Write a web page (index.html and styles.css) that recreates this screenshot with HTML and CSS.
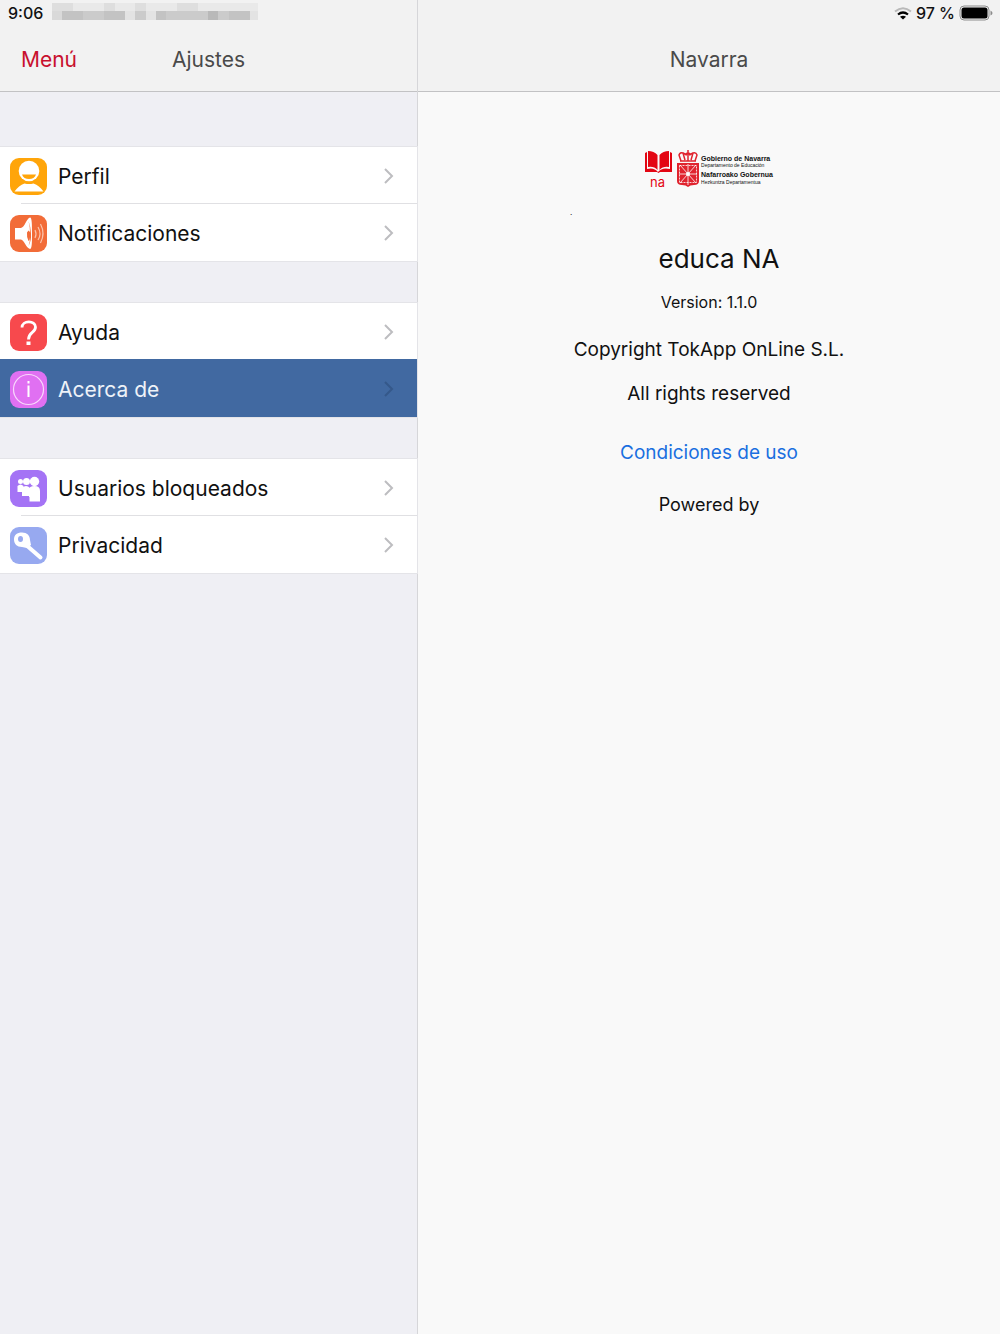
FILE: index.html
```html
<!DOCTYPE html>
<html lang="es">
<head>
  <meta charset="UTF-8">
  <meta name="viewport" content="width=device-width, initial-scale=1">
  <title>Ajustes</title>
  <link rel="stylesheet" href="styles.css">
</head>
<body>

  <aside class="sidebar">
    <header class="header">
      <div class="status">
        <span>9:06</span>
        <svg class="network" viewBox="0 0 206 20" shape-rendering="crispEdges" aria-hidden="true">
          <path fill="#e9e9e9" d="M0 0h206v8H0z"/>
          <path fill="#dedede" d="M0 0h21v8H0zM52 0h11v8H52zM83 0h11v8H83zM125 0h21v8h-21z"/>
          <path fill="#e3e3e3" d="M0 8h206v9H0z"/>
          <path fill="#d9d9d9" d="M0 8h10v9H0z"/>
          <path fill="#c3c3c3" d="M10 8h21v9H10zM52 8h21v9H52zM104 8h10v9h-10zM177 8h21v9h-21z"/>
          <path fill="#cbcbcb" d="M31 8h21v9H31zM83 8h11v9H83zM114 8h42v9h-42zM166 8h11v9h-11z"/>
          <path fill="#b9b9b9" d="M156 8h10v9h-10z"/>
        </svg>
      </div>
      <nav class="bar">
        <a class="back" href="#">Menú</a>
        <h1>Ajustes</h1>
      </nav>
    </header>

    <nav class="groups">
      <ul class="group">
        <li><a class="row" href="#">
          <svg class="icon" viewBox="0 0 37 37" aria-hidden="true">
            <rect width="37" height="37" rx="9" fill="#ffa50a"/>
            <circle cx="19" cy="13" r="10.300" fill="#fff"/>
            <path fill="#ffa50a" d="M12 16.500h14c-1 3-3.500 4.500-7 4.500s-6-1.500-7-4.500z"/>
            <path fill="#fff" d="M4.500 33.500c3-4 6-6.500 10-8 3 .8 6 .8 9 0 4 1.500 7 4 10 8z"/>
          </svg>
          <span>Perfil</span>
          <svg class="chevron" viewBox="0 0 10 16" aria-hidden="true"><path d="M1 1l7 7-7 7"/></svg>
        </a></li>
        <li><a class="row" href="#">
          <svg class="icon" viewBox="0 0 37 37" aria-hidden="true">
            <rect width="37" height="37" rx="9" fill="#f26c38"/>
            <path fill="#fff" d="M5 13h6c4-1 5-9 9-10.500 2 0 2 7 2 16S22 34 20 34c-4-1-5-8-9-9.500H5z"/>
            <path fill="#f26c38" d="M18.500 6q1.500 6 1.500 11l-1.500-1.500-1.500 2q-.5 5 1.500 8.500 1 0 1.500-4 0 5-1.500 9 3-5 2.500-12.500T18.500 6z"/>
            <g fill="none" stroke="#fbc4ad" stroke-width="1.200">
              <path d="M25 15q2 4 0 8M28 12q4 7 0 13M30.500 9q5 9.500 0 19"/>
            </g>
          </svg>
          <span>Notificaciones</span>
          <svg class="chevron" viewBox="0 0 10 16" aria-hidden="true"><path d="M1 1l7 7-7 7"/></svg>
        </a></li>
      </ul>

      <ul class="group">
        <li><a class="row" href="#">
          <svg class="icon" viewBox="0 0 37 37" aria-hidden="true">
            <rect width="37" height="37" rx="9" fill="#f7494d"/>
            <path fill="none" stroke="#fff" stroke-width="2.800" d="M12 13.500c0-7.500 13.500-7.500 13.500-.5 0 6-7 5-7 12.500"/>
            <path fill="#fff" d="M16.500 27.500h4v3.500h-4z"/>
          </svg>
          <span>Ayuda</span>
          <svg class="chevron" viewBox="0 0 10 16" aria-hidden="true"><path d="M1 1l7 7-7 7"/></svg>
        </a></li>
        <li><a class="row selected" href="#" aria-current="page">
          <svg class="icon" viewBox="0 0 37 37" aria-hidden="true">
            <rect width="37" height="37" rx="9" fill="#e070f2"/>
            <circle cx="18.500" cy="18.500" r="15" fill="none" stroke="#f8d8fc" stroke-width="1.200"/>
            <path fill="#fff" d="M17.500 10h2v2.500h-2zM17.500 14.500h2V26h-2z"/>
          </svg>
          <span>Acerca de</span>
          <svg class="chevron" viewBox="0 0 10 16" aria-hidden="true"><path d="M1 1l7 7-7 7"/></svg>
        </a></li>
      </ul>

      <ul class="group">
        <li><a class="row" href="#">
          <svg class="icon" viewBox="0 0 37 37" aria-hidden="true">
            <rect width="37" height="37" rx="9" fill="#a473f5"/>
            <g fill="#fff">
              <circle cx="10.500" cy="11.500" r="2.500"/>
              <path d="M7.500 16q3-3 6 0v6h-6z"/>
              <circle cx="16.500" cy="11.500" r="3.500"/>
              <path d="M12 18q4-4 8 0v8h-8z"/>
              <circle cx="24.500" cy="11.500" r="4.700"/>
              <path d="M19 20q0-4 5.500-4t5.500 5v10.500H19.500V27H19z"/>
            </g>
          </svg>
          <span>Usuarios bloqueados</span>
          <svg class="chevron" viewBox="0 0 10 16" aria-hidden="true"><path d="M1 1l7 7-7 7"/></svg>
        </a></li>
        <li><a class="row" href="#">
          <svg class="icon" viewBox="0 0 37 37" aria-hidden="true">
            <rect width="37" height="37" rx="9" fill="#97a9f0"/>
            <path stroke="#fff" stroke-width="4" stroke-linecap="round" d="M15 17l15.500 13.500"/>
            <path fill="#fff" d="M12 5.500c5 0 8 3 8 7.500l1 5-4 3-5-1c-5 0-8-3-8-7.500s3-7 8-7z"/>
            <ellipse cx="10.500" cy="12" rx="2.500" ry="3" fill="#97a9f0"/>
          </svg>
          <span>Privacidad</span>
          <svg class="chevron" viewBox="0 0 10 16" aria-hidden="true"><path d="M1 1l7 7-7 7"/></svg>
        </a></li>
      </ul>
    </nav>
  </aside>

  <main class="content">
    <header class="header">
      <div class="status status-right">
        <svg class="wifi" viewBox="0 0 18 13" aria-hidden="true">
          <path fill="none" stroke="#b9b9b9" stroke-width="2" d="M1 4.500q8-6.500 16 0"/>
          <path fill="none" stroke="#000" stroke-width="2.200" d="M4 7.500q5-4 10 0"/>
          <path d="M9 12.500L6 9.700q3-2 6 0z"/>
        </svg>
        <span>97 %</span>
        <svg class="battery" viewBox="0 0 34 16" aria-hidden="true">
          <rect x="1" y="1" width="29" height="14" rx="4" fill="none" stroke="#8c8c8c"/>
          <rect x="2.500" y="2.500" width="26" height="11" rx="2.500"/>
          <path fill="#8c8c8c" d="M31.500 5.500q2 1 2 2.500t-2 2.500z"/>
        </svg>
      </div>
      <div class="bar">
        <h1>Navarra</h1>
      </div>
    </header>

    <section class="about">
      <div class="logo">
        <svg class="educa" viewBox="0 0 27 40" aria-hidden="true">
          <path fill="#e30613" d="M0 3l2-1v17q7-2 11 3 4-5 12-3V2l2 1v19H15l-1.500 1-1.500-1H0z"/>
          <path fill="#e30613" d="M3 1q6 0 9.500 4v15Q9 16 3 17zM24 1q-6 0-9.500 4v15q3.500-4 9.500-3z"/>
          <text x="5" y="37">na</text>
        </svg>
        <svg class="shield" viewBox="0 0 22 38" aria-hidden="true">
          <g fill="none" stroke="#e0232e" stroke-width="1.500">
            <path d="M4 11L2 5q1-3 4-2l2 7M18 11l2-6q-1-3-4-2l-2 7M8 5q3-4 6 0M11 0v11M3 11h16M6 3l4 2M16 3l-4 2"/>
          </g>
          <path fill="#e0232e" d="M0 13h22v18q0 4-5 4-4 0-6 2-2-2-6-2-5 0-5-4z"/>
          <g fill="none" stroke="#fff" stroke-width=".8">
            <path d="M3 15l16 18M19 15L3 33M11 14v21M2 24h18"/>
            <path stroke-dasharray="2 1" d="M2.500 15.500h17v17h-17z"/>
          </g>
          <circle cx="11" cy="24" r="2" fill="#fff"/>
        </svg>
        <div class="names">
          <b>Gobierno de Navarra</b>
          <small>Departamento de Educación</small>
          <b>Nafarroako Gobernua</b>
          <small>Hezkuntza Departamentua</small>
        </div>
      </div>
      <p class="dot">.</p>
      <h2>educa NA</h2>
      <p class="version">Version: 1.1.0</p>
      <p>Copyright TokApp OnLine S.L.</p>
      <p class="rights">All rights reserved</p>
      <a class="terms" href="#">Condiciones de uso</a>
      <p class="powered">Powered by</p>
    </section>
  </main>

</body>
</html>
```
FILE: styles.css
```css
* {
  box-sizing: border-box;
}
body {
  margin: 0;
  display: flex;
  min-height: 100vh;
  font-family: Inter, "Liberation Sans", sans-serif;
  color: #111;
  background: #f9f9f9;
}
h1, h2, p, ul {
  margin: 0;
  padding: 0;
  font-weight: 400;
}
a {
  text-decoration: none;
}
svg {
  display: block;
  flex: none;
}

.sidebar {
  width: 41.8%;
  background: #efeff4;
  border-right: 1px solid #d6d6d9;
}
.content {
  flex: 1;
}

/* header */
.header {
  height: 92px;
  background: #f2f2f2;
  border-bottom: 1px solid #c2c2c4;
}
.status {
  display: flex;
  align-items: center;
  gap: 9px;
  height: 26px;
  padding: 0 8px;
  font-size: 16px;
  font-weight: 500;
}
.status-right {
  justify-content: flex-end;
  gap: 4px;
  padding-right: 7px;
}
.network {
  width: 206px;
  height: 20px;
}
.wifi {
  width: 18px;
  height: 13px;
}
.battery {
  width: 34px;
  height: 16px;
}
.bar {
  display: grid;
  grid-template-columns: 1fr auto 1fr;
  align-items: center;
  height: 66px;
  padding: 0 21px;
  font-size: 21px;
}
.bar h1 {
  grid-column: 2;
  font-size: 21px;
  color: #4a4a4a;
}
.back {
  color: #c8102e;
}

/* settings list */
.groups {
  display: flex;
  flex-direction: column;
  gap: 42px;
  padding-top: 55px;
}
.group {
  list-style: none;
  background: #fff;
  box-shadow: 0 0 0 1px #e4e4e8;
}
.row {
  display: flex;
  align-items: center;
  gap: 11px;
  height: 57px;
  padding: 1px 23px 0 10px;
  font-size: 21px;
  color: #111;
}
.row span {
  flex: 1;
}
.group li:first-child .row {
  background: linear-gradient(#e0e0e3, #e0e0e3) 21px 100% / 100% 1px no-repeat;
}
.icon {
  width: 37px;
  height: 37px;
}
.chevron {
  width: 10px;
  height: 16px;
  fill: none;
  stroke: #bdbdc0;
  stroke-width: 2;
}
.row.selected {
  background: #4169a1;
  box-shadow: 0 -1px #4169a1;
  color: #eef2f8;
}
.selected .chevron {
  stroke: #35588a;
}

/* about */
.about {
  display: flex;
  flex-direction: column;
  align-items: center;
  max-width: 278px;
  margin: 0 auto;
  padding-top: 58px;
  font-size: 19px;
  line-height: 24px;
  white-space: nowrap;
}
.logo {
  display: flex;
  height: 40px;
}
.educa {
  width: 27px;
  height: 40px;
  margin-right: 5px;
}
.educa text {
  font-size: 13px;
  fill: #e30613;
}
.shield {
  width: 22px;
  height: 38px;
  margin-right: 2px;
}
.names {
  display: grid;
  grid-template-rows: 7px 9px 8px 6px;
  padding-top: 5px;
  font-family: "Liberation Sans", sans-serif;
  line-height: 7px;
}
.names b {
  font-size: 7px;
}
.names small {
  font-size: 5px;
}
.dot {
  align-self: flex-start;
  margin-top: 14px;
  font-size: 8px;
  line-height: 16px;
}
.about h2 {
  margin-top: 22px;
  padding-left: 20px;
  font-size: 26px;
  line-height: 34px;
}
.version {
  margin: 16px 0 26px;
  font-size: 16px;
  line-height: 20px;
}
.rights {
  margin-top: 20px;
}
.terms {
  margin: 35px 0 28px;
  color: #1a6fe0;
}
.powered {
  font-size: 18px;
}
```
